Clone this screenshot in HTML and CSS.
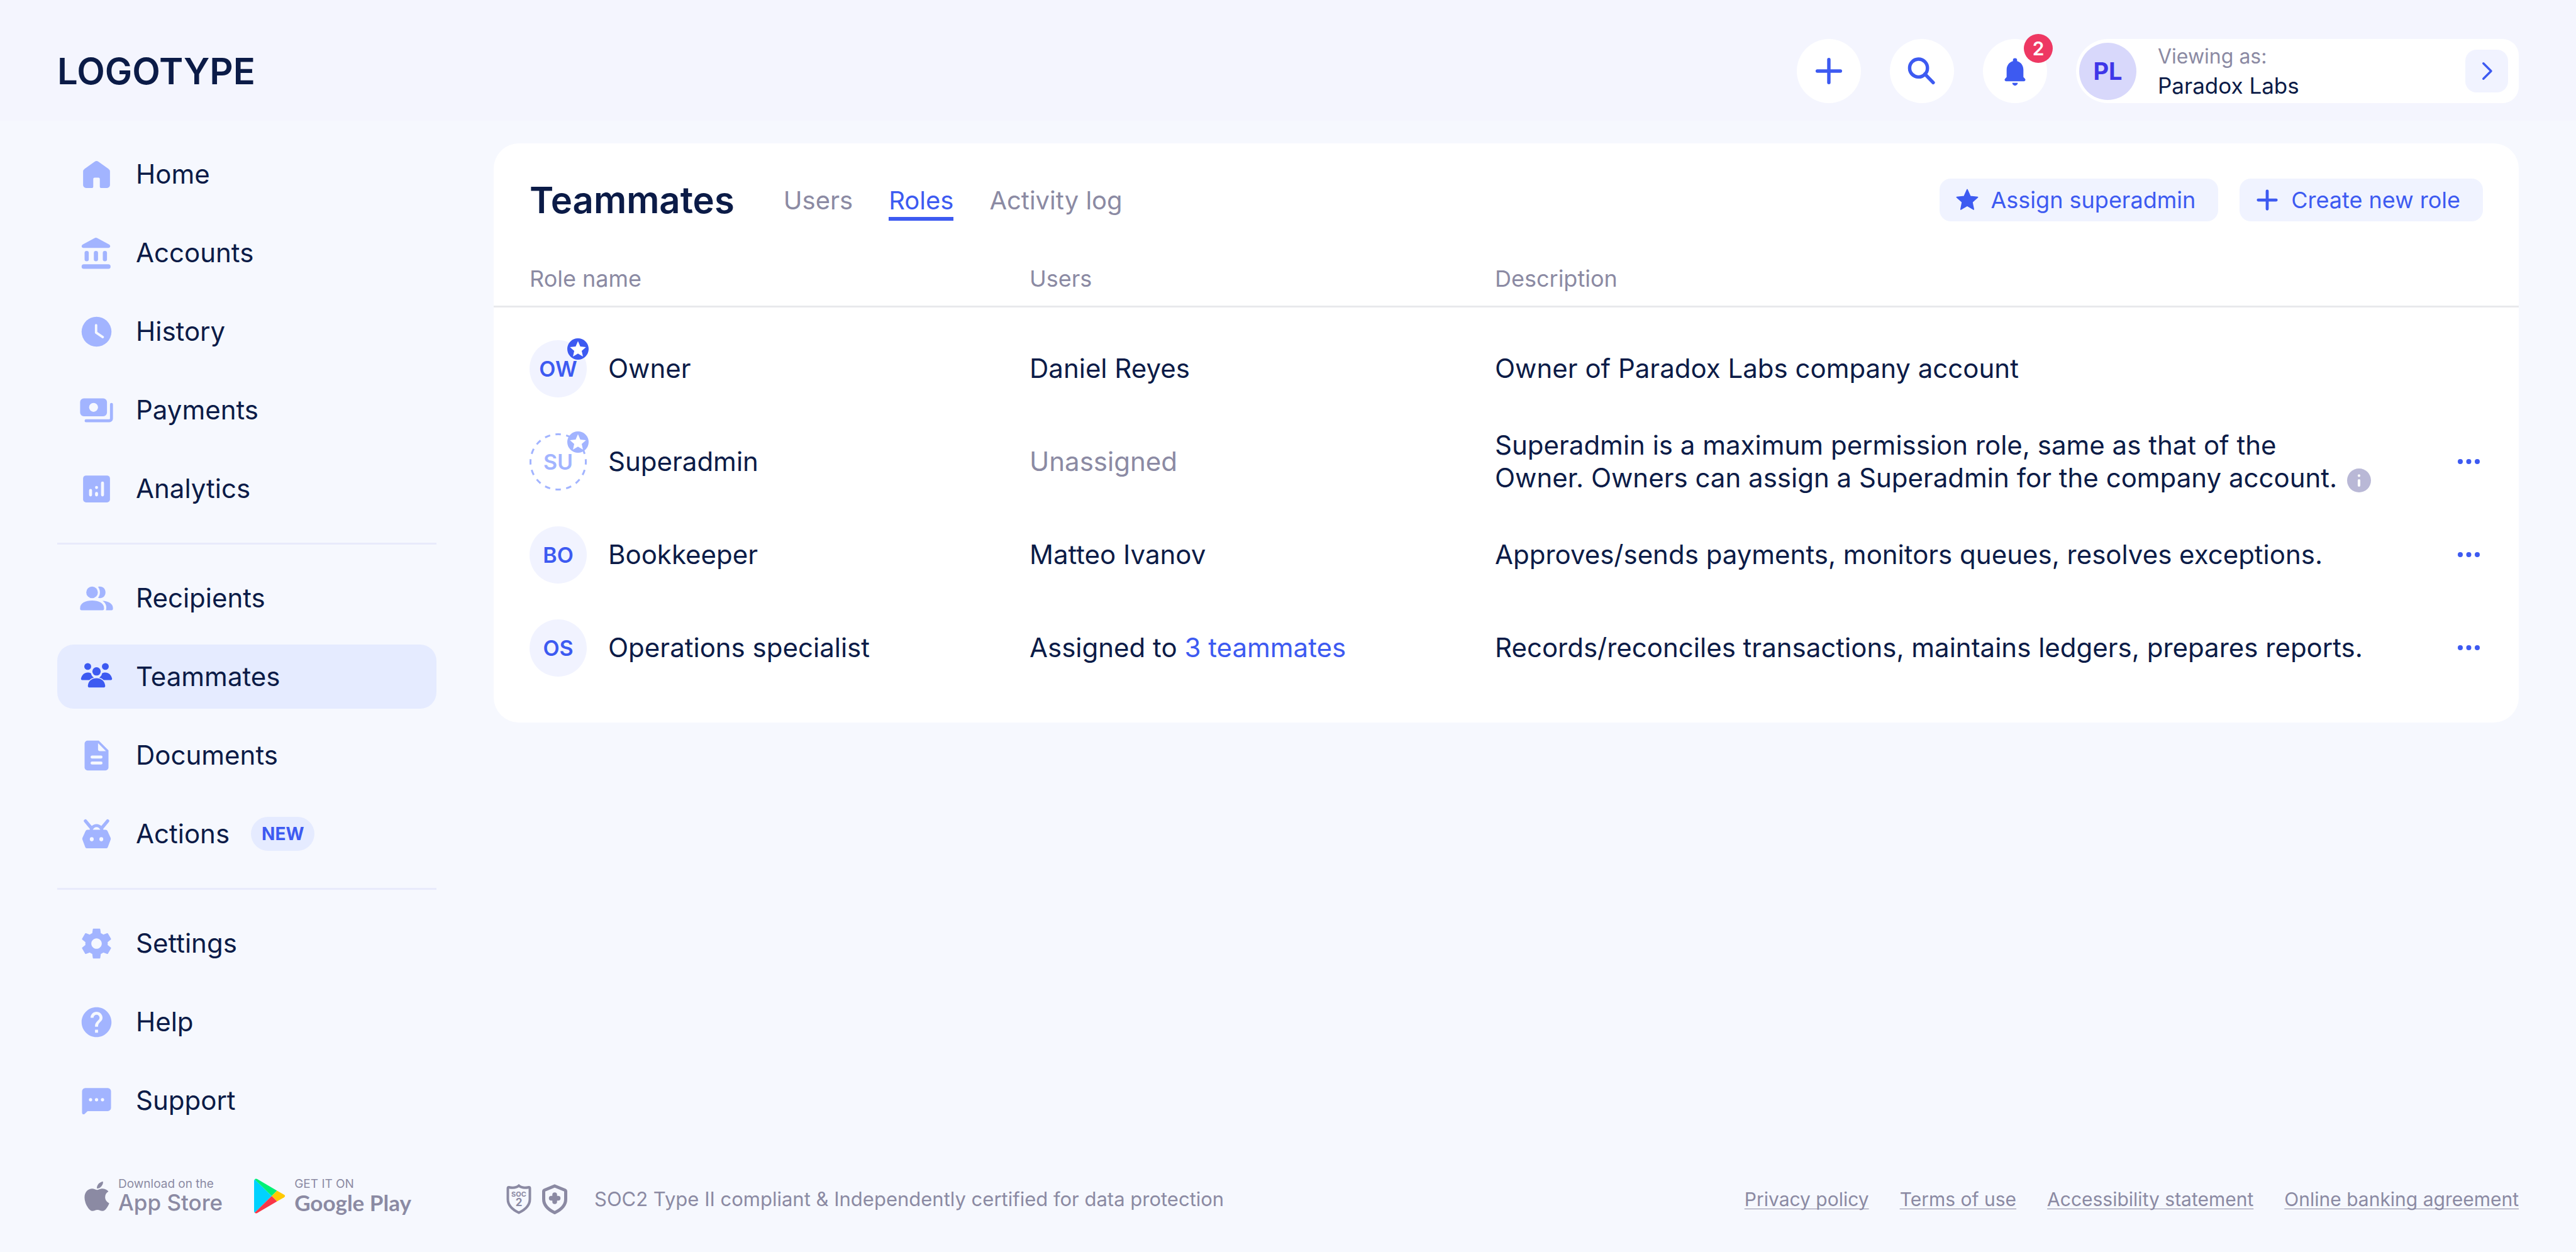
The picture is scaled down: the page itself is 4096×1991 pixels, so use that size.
FILE: index.html
```html
<!DOCTYPE html>
<html lang="en">
<head>
<meta charset="UTF-8">
<meta name="viewport" content="width=device-width, initial-scale=1.0">
<title>Teammates - Roles</title>
<link rel="stylesheet" href="styles.css">
</head>
<body>

<header class="topbar">
    <a class="logo" href="#">LOGOTYPE</a>
    <div class="topbar-actions">
        <button class="round-button" aria-label="Add">
            <svg viewBox="0 0 24 24"><path d="M12 3.2v17.6M3.2 12h17.6" fill="none" stroke="currentColor" stroke-width="2.6" stroke-linecap="round"/></svg>
        </button>
        <button class="round-button" aria-label="Search">
            <svg viewBox="0 0 24 24"><path d="M14.2 14.2l6.4 6.6M16.2 9.7a6.8 6.8 0 1 1-13.6 0a6.8 6.8 0 0 1 13.6 0z" fill="none" stroke="currentColor" stroke-width="2.6" stroke-linecap="round"/></svg>
        </button>
        <button class="round-button" aria-label="Notifications, 2 new">
            <svg viewBox="0 0 24 24"><path d="M12 2.2a1.6 1.6 0 0 0-1.6 1.6v.6C7.4 5.2 5.6 7.8 5.6 11v5.6l-1.2 1.3a1.1 1.1 0 0 0 .8 1.9h13.6a1.1 1.1 0 0 0 .8-1.9l-1.2-1.3V11c0-3.2-1.8-5.8-4.8-6.6v-.6A1.6 1.6 0 0 0 12 2.2zM9.900 21h4.200a2.100 2.100 0 0 1-4.200 0z"/></svg>
            <span class="badge">2</span>
        </button>
        <button class="account">
            <span class="account-avatar">PL</span>
            <span class="account-text">
                <span class="account-label">Viewing as:</span>
                <span class="account-name">Paradox Labs</span>
            </span>
            <span class="account-arrow">
                <svg viewBox="0 0 24 24"><path d="M9 5l7 7-7 7" fill="none" stroke="currentColor" stroke-width="2" stroke-linecap="round" stroke-linejoin="round"/></svg>
            </span>
        </button>
    </div>
</header>

<div class="layout">
    <nav class="sidebar">
        <a class="nav-item" href="#">
            <svg viewBox="0 0 24 24"><path d="M10.800 3.400a2 2 0 0 1 2.400 0l6.800 4.800a2.400 2.400 0 0 1 1 2V19a2 2 0 0 1-2 2h-4a.8.8 0 0 1-.8-.8V15a.9.9 0 0 0-.9-.9h-2.600a.9.9 0 0 0-.9.9v5.200a.8.8 0 0 1-.8.8H5a2 2 0 0 1-2-2v-8.800a2.400 2.400 0 0 1 1-2z"/></svg>
            Home
        </a>
        <a class="nav-item" href="#">
            <svg viewBox="0 0 24 24"><path d="M10.600 2a2 2 0 0 1 2 0l7.800 4.200c1.200.7.900 2.300-.4 2.300H3.200c-1.300 0-1.600-1.600-.4-2.300z"/><rect x="4" y="10.500" width="2.800" height="7" rx="1.400"/><rect x="10.200" y="10.500" width="2.800" height="7" rx="1.400"/><rect x="16.200" y="10.500" width="2.800" height="7" rx="1.400"/><rect x="2" y="19.500" width="19.400" height="3" rx="1.500"/></svg>
            Accounts
        </a>
        <a class="nav-item" href="#">
            <svg viewBox="0 0 24 24"><circle cx="12" cy="12" r="10"/><path class="cut-line" d="M11.700 7.600v5l4.500 3" stroke-width="1.600"/></svg>
            History
        </a>
        <a class="nav-item" href="#">
            <svg viewBox="0 0 24 24"><path fill-rule="evenodd" d="M3.500 4h13A2.500 2.500 0 0 1 19 6.500v7a2.500 2.500 0 0 1-2.500 2.500h-13A2.500 2.500 0 0 1 1 13.500v-7A2.500 2.500 0 0 1 3.500 4zM10 7a3 3 0 1 0 0 6a3 3 0 0 0 0-6z"/><path d="M22 8v9.500a1.500 1.500 0 0 1-1.500 1.500H5" fill="none" stroke="currentColor" stroke-width="2" stroke-linecap="round"/></svg>
            Payments
        </a>
        <a class="nav-item" href="#">
            <svg viewBox="0 0 24 24"><rect x="3" y="3" width="18" height="18" rx="2"/><path class="cut-line" d="M8 13v3M16 8v8M12 11v.1M12 15v1" stroke-width="2"/></svg>
            Analytics
        </a>
        <hr class="nav-divider">
        <a class="nav-item" href="#">
            <svg viewBox="0 0 24 24"><circle cx="9" cy="8" r="3.900"/><path d="M1 18.500c0-3.300 3.500-5 8-5s8 1.700 8 5v.5a1 1 0 0 1-1 1H2a1 1 0 0 1-1-1z"/><path d="M13 4.300c2.700-.8 5 .9 5 3.700s-2.300 4.500-5 3.700c1.700-2.200 1.700-5.200 0-7.400zM16 13.700c4 .2 7 1.900 7 4.800v.5a1 1 0 0 1-1 1h-3.700c.7-2.600 0-4.700-2.300-6.300z"/></svg>
            Recipients
        </a>
        <a class="nav-item active" href="#" aria-current="page">
            <svg viewBox="0 0 24 24"><circle cx="6.100" cy="5" r="2.300"/><circle cx="17.900" cy="5" r="2.300"/><circle cx="12" cy="8.300" r="2.800"/><path d="M6 9c.9 0 1.700.2 2.300.6.200 1.300.9 2.200 1.900 2.800-1.200.3-2.200.9-3 1.700H2.400c-.6 0-.9-.5-.8-1C2.200 10.500 3.900 9 6 9zM18 9c-.9 0-1.700.2-2.300.6-.2 1.300-.9 2.200-1.900 2.800 1.200.3 2.200.9 3 1.700h4.800c.6 0 .9-.5.800-1C21.800 10.500 20.100 9 18 9z"/><path d="M12 12.800c3.300 0 5.500 2 5.800 5.100.1.700-.4 1.200-1.100 1.200H7.300c-.7 0-1.200-.5-1.100-1.200.3-3.100 2.500-5.100 5.800-5.100z"/></svg>
            Teammates
        </a>
        <a class="nav-item" href="#">
            <svg viewBox="0 0 24 24"><path fill-rule="evenodd" d="M6 2h7.500L20 8.500V20a2 2 0 0 1-2 2H6a2 2 0 0 1-2-2V4a2 2 0 0 1 2-2zM13 3.700V8a1 1 0 0 0 1 1h4.300z"/><path class="cut-line" d="M9 13h6M9 17h6" stroke-width="2"/></svg>
            Documents
        </a>
        <a class="nav-item" href="#">
            <svg viewBox="0 0 24 24"><path d="M4.600 3.200l4 4.800M19.400 3.200l-4 4.800" fill="none" stroke="currentColor" stroke-width="2.200" stroke-linecap="round"/><path d="M8.200 10.500a3.800 4.200 0 0 1 7.600 0" fill="none" stroke="currentColor" stroke-width="2"/><path fill-rule="evenodd" d="M6 9h12a1.500 1.500 0 0 1 1.300.8l2.100 4.600a1.600 1.600 0 0 1 0 1.400L19.500 20.800A1.200 1.200 0 0 1 18.400 21.500H5.600a1.200 1.200 0 0 1-1.100-.7L2.600 15.800a1.600 1.600 0 0 1 0-1.400L4.700 9.800A1.500 1.500 0 0 1 6 9zM8.800 14a1.300 1.400 0 1 0 0 2.800a1.300 1.400 0 0 0 0-2.800zM15.200 14a1.300 1.400 0 1 0 0 2.800a1.300 1.400 0 0 0 0-2.800z"/></svg>
            Actions <span class="tag-new">NEW</span>
        </a>
        <hr class="nav-divider">
        <a class="nav-item" href="#">
            <svg viewBox="0 0 24 24"><path d="M19.430 12.980c.04-.32.07-.64.07-.98s-.03-.66-.07-.98l2.110-1.650c.19-.15.240-.42.120-.64l-2-3.460c-.12-.22-.39-.3-.61-.22l-2.490 1c-.52-.4-1.080-.73-1.690-.98l-.38-2.650C14.460 2.180 14.250 2 14 2h-4c-.25 0-.46.18-.49.42l-.38 2.650c-.61.25-1.170.59-1.690.98l-2.490-1c-.23-.09-.49 0-.61.22l-2 3.460c-.13.220-.07.49.12.64l2.110 1.650c-.04.32-.07.65-.07.98s.03.66.07.98l-2.110 1.650c-.19.150-.24.420-.12.640l2 3.460c.12.22.39.3.61.22l2.490-1c.52.4 1.080.73 1.690.98l.38 2.650c.03.24.24.42.49.42h4c.25 0 .46-.18.49-.42l.38-2.650c.61-.25 1.170-.59 1.690-.98l2.490 1c.23.09.49 0 .61-.22l2-3.460c.12-.22.07-.49-.12-.64l-2.110-1.650zM12 15.500c-1.930 0-3.500-1.570-3.500-3.500s1.570-3.500 3.500-3.500 3.500 1.570 3.500 3.500-1.570 3.500-3.500 3.500z"/></svg>
            Settings
        </a>
        <a class="nav-item" href="#">
            <svg viewBox="0 0 24 24"><path d="M12 2C6.480 2 2 6.480 2 12s4.480 10 10 10 10-4.480 10-10S17.520 2 12 2zm1 17h-2v-2h2v2zm2.070-7.750l-.9.920C13.450 12.900 13 13.500 13 15h-2v-.5c0-1.100.45-2.100 1.170-2.830l1.240-1.260c.37-.36.59-.86.59-1.410 0-1.100-.9-2-2-2s-2 .9-2 2H8c0-2.210 1.790-4 4-4s4 1.790 4 4c0 .88-.36 1.680-.93 2.250z"/></svg>
            Help
        </a>
        <a class="nav-item" href="#">
            <svg viewBox="0 0 24 24"><path fill-rule="evenodd" d="M4.500 3.500h15A2.200 2.200 0 0 1 21.700 5.700v11A2.200 2.200 0 0 1 19.500 18.900H6l-2 1.900c-.7.600-1.700.2-1.700-.8V5.700A2.200 2.200 0 0 1 4.500 3.500z"/><path class="cut-line" d="M8 11.300v.01M12 11.300v.01M16 11.300v.01" stroke-width="2.200"/></svg>
            Support
        </a>
    </nav>

    <main class="card">
        <div class="card-header">
            <h1>Teammates</h1>
            <div class="tabs">
                <a class="tab" href="#">Users</a>
                <a class="tab active" href="#">Roles</a>
                <a class="tab" href="#">Activity log</a>
            </div>
            <div class="card-buttons">
                <button class="soft-button">
                    <svg viewBox="0 0 24 24"><path d="M12 1.500l3.100 6.900 7.400.8-5.500 5 1.500 7.300-6.500-3.700-6.500 3.700L7 14.200l-5.500-5 7.400-.8z" stroke="currentColor" stroke-width="1" stroke-linejoin="round"/></svg>
                    Assign superadmin
                </button>
                <button class="soft-button">
                    <svg viewBox="0 0 24 24"><path d="M12 3v18M3 12h18" fill="none" stroke="currentColor" stroke-width="3" stroke-linecap="round"/></svg>
                    Create new role
                </button>
            </div>
        </div>

        <table class="roles">
            <thead>
                <tr>
                    <th class="col-role">Role name</th>
                    <th class="col-users">Users</th>
                    <th>Description</th>
                    <th class="col-menu" aria-label="Menu"></th>
                </tr>
            </thead>
            <tbody>
                <tr>
                    <td>
                        <div class="role">
                            <span class="avatar">OW
                                <svg class="star-badge" viewBox="0 0 24 24"><circle cx="12" cy="12" r="12"/><path fill="#fff" d="M12 3.200l2.600 5.900 6.400.7-4.800 4.300 1.400 6.300-5.600-3.200-5.600 3.200 1.400-6.300L3 9.800l6.400-.7z"/></svg>
                            </span>
                            Owner
                        </div>
                    </td>
                    <td>Daniel Reyes</td>
                    <td>Owner of Paradox Labs company account</td>
                    <td></td>
                </tr>
                <tr>
                    <td>
                        <div class="role">
                            <span class="avatar empty">
                                <svg class="dashes" viewBox="0 0 91 91"><circle cx="45.500" cy="45.500" r="44" fill="none" stroke="currentColor" stroke-width="3" pathLength="160" stroke-dasharray="5 5" stroke-dashoffset="2.500"/></svg>SU
                                <svg class="star-badge" viewBox="0 0 24 24"><circle cx="12" cy="12" r="12"/><path fill="#fff" d="M12 3.200l2.600 5.900 6.400.7-4.800 4.300 1.400 6.300-5.600-3.200-5.600 3.200 1.400-6.300L3 9.800l6.400-.7z"/></svg>
                            </span>
                            Superadmin
                        </div>
                    </td>
                    <td class="muted">Unassigned</td>
                    <td>
                        Superadmin is a maximum permission role, same as that of the<br>
                        Owner. Owners can assign a Superadmin for the company account.
                        <svg class="info" viewBox="0 0 24 24"><circle cx="12" cy="12" r="12"/><circle cx="12" cy="7.200" r="1.300" fill="#fff"/><path d="M12 12v5" stroke="#fff" stroke-width="2.600" stroke-linecap="round"/></svg>
                    </td>
                    <td><button class="more" aria-label="More"><svg viewBox="0 0 35 8"><circle cx="4" cy="4" r="4"/><circle cx="17.500" cy="4" r="4"/><circle cx="31" cy="4" r="4"/></svg></button></td>
                </tr>
                <tr>
                    <td>
                        <div class="role"><span class="avatar">BO</span> Bookkeeper</div>
                    </td>
                    <td>Matteo Ivanov</td>
                    <td>Approves/sends payments, monitors queues, resolves exceptions.</td>
                    <td><button class="more" aria-label="More"><svg viewBox="0 0 35 8"><circle cx="4" cy="4" r="4"/><circle cx="17.500" cy="4" r="4"/><circle cx="31" cy="4" r="4"/></svg></button></td>
                </tr>
                <tr>
                    <td>
                        <div class="role"><span class="avatar">OS</span> Operations specialist</div>
                    </td>
                    <td>Assigned to <a class="link" href="#">3 teammates</a></td>
                    <td>Records/reconciles transactions, maintains ledgers, prepares reports.</td>
                    <td><button class="more" aria-label="More"><svg viewBox="0 0 35 8"><circle cx="4" cy="4" r="4"/><circle cx="17.500" cy="4" r="4"/><circle cx="31" cy="4" r="4"/></svg></button></td>
                </tr>
            </tbody>
        </table>
    </main>
</div>

<footer class="footer">
    <div class="stores">
        <a class="store" href="#">
            <svg class="apple" viewBox="0 0 384 470"><path d="M318.700 250.700c-.2-36.700 16.400-64.400 50-84.800-18.800-26.900-47.200-41.700-84.700-44.600-35.500-2.800-74.300 20.700-88.500 20.700-15 0-49.400-19.700-76.400-19.700C63.300 123.200 4 167.100 4 256.500q0 39.600 14.400 81.800c12.800 36.700 59 126.700 107.200 125.200 25.200-.6 43-17.900 75.800-17.900 31.800 0 48.300 17.900 76.400 17.900 48.600-.7 90.400-82.500 102.600-119.300-65.200-30.700-61.700-90-61.700-91.900zM262.100 86.500C289.400 54.100 286.900 24.600 286.100 14c-24.100 1.400-52 16.400-67.900 34.900-17.500 19.800-27.800 44.300-25.600 71.900 26.100 2 49.900-11.400 69.500-34.300z"/></svg>
            <span class="store-text">
                <span class="store-small">Download on the</span>
                <span class="store-name">App Store</span>
            </span>
        </a>
        <a class="store" href="#">
            <svg class="play" viewBox="0 0 50 56"><path fill="#00d2ff" d="M1 1.500Q0 2.500 0 4v48q0 1.500 1 2.500L28 28z"/><path fill="#00f076" d="M1 1.500C2 .2 3.500.2 5 1l31.500 18.500L28 28z"/><path fill="#ffc900" d="M36.500 19.500l11 6.300q3.500 2.200 0 4.400l-11 6.300L28 28z"/><path fill="#f93647" d="M1 54.500C2 55.800 3.500 55.800 5 55l31.500-18.500L28 28z"/></svg>
            <span class="store-text">
                <span class="store-small">GET IT ON</span>
                <span class="store-name google">Google Play</span>
            </span>
        </a>
    </div>
    <div class="compliance">
        <svg class="shield" viewBox="0 0 40 48"><path d="M20 2.500c3.500 3 9.500 4 16 2.500 1.500 0 1.500 0 1.500 2v17c0 9-7 16.500-17.500 21.500C9.500 40.500 2.500 33 2.500 24V7c0-2 0-2 1.500-2 6.500 1.500 12.500.5 16-2.500z" fill="none" stroke="currentColor" stroke-width="4"/><text class="soc" x="20" y="20" text-anchor="middle">SOC</text><text class="soc-two" x="20" y="35" text-anchor="middle">2</text></svg>
        <svg class="shield" viewBox="0 0 40 48"><path d="M20 3l16 6.500c1 .4 1.500 1 1.500 2V24c0 9-7 16.500-17.500 21.500C9.500 40.500 2.500 33 2.500 24V11.500c0-1 .5-1.600 1.500-2z" fill="none" stroke="currentColor" stroke-width="5"/><path d="M20 17v11M14.500 22.500h11" fill="none" stroke="currentColor" stroke-width="7.500" stroke-linecap="round"/></svg>
        <span class="compliance-text">SOC2 Type II compliant &amp; Independently certified for data protection</span>
    </div>
    <div class="footer-links">
        <a href="#">Privacy policy</a>
        <a href="#">Terms of use</a>
        <a href="#">Accessibility statement</a>
        <a href="#">Online banking agreement</a>
    </div>
</footer>

</body>
</html>
```
FILE: styles.css
```css
* {
    box-sizing: border-box;
}

body {
    margin: 0;
    min-height: 100vh;
    display: flex;
    flex-direction: column;
    background-color: #f6f8fe;
    color: #0b1b47;
    font-family: 'Inter', 'Open Sans', sans-serif;
    font-size: 42px;
    line-height: 52px;
}

a {
    color: inherit;
    text-decoration: none;
}

button {
    font: inherit;
    color: inherit;
    border: none;
    padding: 0;
    cursor: pointer;
}

svg {
    fill: currentColor;
    flex-shrink: 0;
}

/* top bar */
.topbar {
    display: flex;
    justify-content: space-between;
    align-items: center;
    padding: 62px 91px 28px;
    background-color: #f4f5fe;
}

.logo {
    font-size: 58px;
    font-weight: 600;
}

.topbar-actions {
    display: flex;
    gap: 46px;
}

.round-button {
    position: relative;
    width: 102px;
    height: 102px;
    border-radius: 50%;
    background-color: #fff;
    color: #3d5af1;
    display: flex;
    align-items: center;
    justify-content: center;
}

.round-button svg {
    width: 50px;
    height: 50px;
}

.badge {
    position: absolute;
    top: -8px;
    right: -9px;
    width: 46px;
    height: 46px;
    border-radius: 50%;
    background-color: #ee3863;
    color: #fff;
    font-size: 30px;
    font-weight: 600;
    line-height: 46px;
    text-align: center;
}

.account {
    display: flex;
    align-items: center;
    width: 704px;
    height: 102px;
    padding: 0 17px 0 5px;
    border-radius: 51px 26px 26px 51px;
    background-color: #fff;
    text-align: left;
}

.account-avatar {
    width: 91px;
    height: 91px;
    border-radius: 50%;
    background-color: #d8d8fb;
    color: #3f37e8;
    font-size: 38px;
    font-weight: 700;
    line-height: 91px;
    text-align: center;
}

.account-text {
    flex: 1;
    display: flex;
    flex-direction: column;
    padding-left: 34px;
    line-height: 47px;
}

.account-label {
    color: #8b8aa3;
    font-size: 32px;
}

.account-name {
    font-size: 35px;
}

.account-arrow {
    width: 68px;
    height: 68px;
    border-radius: 18px;
    background-color: #f1f3ff;
    color: #3d5af1;
    display: flex;
    align-items: center;
    justify-content: center;
}

.account-arrow svg {
    width: 42px;
    height: 42px;
}

/* sidebar */
.layout {
    flex: 1;
    display: flex;
    align-items: flex-start;
    gap: 91px;
    padding: 0 91px;
}

.sidebar {
    flex: 0 0 603px;
    padding-top: 34px;
    display: flex;
    flex-direction: column;
}

.nav-item {
    display: flex;
    align-items: center;
    gap: 34px;
    height: 102px;
    padding: 0 34px;
    border-radius: 26px;
}

.nav-item + .nav-item {
    margin-top: 23px;
}

.nav-item svg {
    width: 57px;
    height: 57px;
    color: #a2b4ff;
}

.nav-item .cut-line {
    fill: none;
    stroke: #f6f8fe;
    stroke-linecap: round;
    stroke-linejoin: round;
}

.nav-item.active {
    background-color: #e5ebff;
}

.nav-item.active svg {
    color: #3d5af1;
}

.nav-divider {
    width: 100%;
    height: 3px;
    margin: 35px 0 34px;
    border: none;
    background-color: #e8eafb;
}

.tag-new {
    padding: 0 17px;
    border-radius: 28px;
    background-color: #e5ebff;
    color: #3d5af1;
    font-size: 28px;
    font-weight: 700;
    line-height: 54px;
}

/* card */
.card {
    flex: 1;
    margin-top: 36px;
    padding-bottom: 45px;
    border-radius: 40px;
    background-color: #fff;
}

.card-header {
    display: flex;
    align-items: center;
    padding: 56px 57px 0;
}

h1 {
    margin: 0;
    font-size: 58px;
    font-weight: 600;
    line-height: 68px;
}

.tabs {
    display: flex;
    gap: 57px;
    margin-left: 78px;
    color: #8b8aa3;
    font-size: 40px;
}

.tab {
    padding-top: 8px;
    border-bottom: 6px solid transparent;
}

.tab.active {
    color: #3d5af1;
    border-color: #3d5af1;
}

.card-buttons {
    display: flex;
    gap: 34px;
    margin-left: auto;
}

.soft-button {
    display: flex;
    align-items: center;
    gap: 19px;
    height: 68px;
    padding: 0 36px 0 25px;
    border-radius: 18px;
    background-color: #f0f3ff;
    color: #3d5af1;
    font-size: 36px;
}

.soft-button svg {
    width: 38px;
    height: 38px;
}

.roles {
    width: 100%;
    border-collapse: collapse;
    table-layout: fixed;
}

.roles th {
    height: 135px;
    padding: 49px 0 0;
    border-bottom: 3px solid #e8e9ec;
    color: #8b8aa3;
    font-size: 36px;
    font-weight: 400;
    text-align: left;
}

.roles td {
    height: 148px;
    padding: 0;
}

.roles th:first-child,
.roles td:first-child {
    padding-left: 57px;
}

.roles tbody::before {
    content: '';
    display: table-row;
    height: 25px;
}

.col-role {
    width: 852px;
}

.col-users {
    width: 740px;
}

.col-menu {
    width: 97px;
}

.role {
    display: flex;
    align-items: center;
    gap: 34px;
}

.avatar {
    position: relative;
    width: 91px;
    height: 91px;
    border-radius: 50%;
    background-color: #f1f3ff;
    color: #3d5af1;
    font-size: 34px;
    font-weight: 600;
    line-height: 91px;
    text-align: center;
}

.avatar.empty {
    background: none;
    color: #a2b4ff;
}

.dashes {
    position: absolute;
    inset: 0;
}

.star-badge {
    position: absolute;
    top: -3px;
    right: -3px;
    width: 34px;
    height: 34px;
}

.muted {
    color: #8b8aa3;
}

.link {
    color: #3d5af1;
}

.info {
    width: 38px;
    height: 38px;
    margin-left: 4px;
    color: #b9b8d6;
    vertical-align: -8px;
}

.more {
    display: flex;
    align-items: center;
    height: 52px;
    background: none;
    color: #3d5af1;
}

.more svg {
    width: 35px;
    height: 8px;
}

/* footer */
.footer {
    display: flex;
    align-items: center;
    padding: 0 91px 50px;
    color: #8b8aa3;
    font-size: 31px;
}

.stores {
    flex: 0 0 714px;
    display: flex;
    gap: 50px;
    padding: 0 0 10px 43px;
}

.store {
    display: flex;
    align-items: center;
    gap: 14px;
}

.apple {
    width: 40px;
    height: 50px;
}

.play {
    width: 50px;
    height: 56px;
}

.store-text {
    display: flex;
    flex-direction: column;
}

.store-small {
    font-size: 19px;
    line-height: 20px;
}

.store-name {
    font-size: 35px;
    font-weight: 500;
    line-height: 38px;
}

.store-name.google {
    font-family: 'Lato', sans-serif;
    font-weight: 700;
}

.compliance {
    display: flex;
    align-items: center;
    gap: 17px;
}

.shield {
    width: 40px;
    height: 48px;
}

.soc {
    font-size: 11px;
    font-weight: 700;
}

.soc-two {
    font-size: 17px;
    font-weight: 700;
}

.compliance-text {
    margin-left: 26px;
}

.footer-links {
    display: flex;
    gap: 49px;
    margin-left: auto;
    font-size: 30px;
}

.footer-links a {
    text-decoration: underline 1px;
    text-decoration-skip-ink: none;
    text-underline-offset: 4px;
}
```
